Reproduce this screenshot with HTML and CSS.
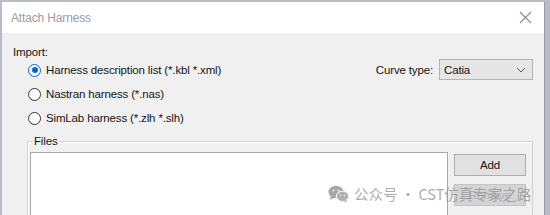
FILE: index.html
```html
<!DOCTYPE html>
<html>
<head>
<meta charset="utf-8">
<link rel="stylesheet" href="styles.css">
</head>
<body>
<div class="window">
  <div class="titlebar">
    <span class="title">Attach Harness</span>
    <svg class="close" width="13" height="13" viewBox="0 0 13 13"><path d="M1 1 L12 12 M12 1 L1 12" stroke="#8a8a8a" stroke-width="1.1" fill="none"/></svg>
  </div>
  <div class="content">
    <div class="top">
      <div class="import">
        <div class="label">Import:</div>
        <div class="radio-row"><span class="radio checked"></span><span>Harness description list (*.kbl *.xml)</span></div>
        <div class="radio-row"><span class="radio"></span><span>Nastran harness (*.nas)</span></div>
        <div class="radio-row"><span class="radio"></span><span>SimLab harness (*.zlh *.slh)</span></div>
      </div>
      <div class="curve">
        <span class="curve-label">Curve type:</span>
        <div class="select"><span>Catia</span>
          <svg width="10" height="6" viewBox="0 0 10 6"><path d="M1 1 L5 5 L9 1" stroke="#555" stroke-width="1" fill="none"/></svg>
        </div>
      </div>
    </div>
    <div class="group">
      <span class="legend">Files</span>
      <div class="group-body">
        <div class="listbox"></div>
        <div class="buttons">
          <div class="btn">Add</div>
          <div class="btn disabled">Remove</div>
        </div>
      </div>
    </div>
  </div>
  <div class="watermark">
    <svg width="21" height="18" viewBox="0 0 21 18">
      <ellipse cx="8" cy="7" rx="7.5" ry="6.3" fill="#a6a6a6"/>
      <path d="M3 11 L2 15 L6.5 12.5 Z" fill="#a6a6a6"/>
      <ellipse cx="14.5" cy="11.3" rx="6.2" ry="5.2" fill="#b0b0b0" stroke="#f0f0f0" stroke-width="1.2"/>
      <path d="M18 15 L19.5 17.6 L15.5 16 Z" fill="#b0b0b0"/>
      <circle cx="5.5" cy="5.5" r="1" fill="#f0f0f0"/>
      <circle cx="10.5" cy="5.5" r="1" fill="#f0f0f0"/>
      <circle cx="12.5" cy="10.5" r="0.8" fill="#f0f0f0"/>
      <circle cx="16.5" cy="10.5" r="0.8" fill="#f0f0f0"/>
    </svg>
    <span>公众号 · CST仿真专家之路</span>
  </div>
</div>
</body>
</html>
```

FILE: styles.css
```css
html, body {
  margin: 0;
  padding: 0;
}
body {
  background: #b8bcc8;
  width: 550px;
  height: 215px;
  overflow: hidden;
  font-family: "Liberation Sans", Arial, sans-serif;
  font-size: 11.5px;
  letter-spacing: -0.15px;
  color: #151515;
}
.window {
  position: relative;
  margin: 2px 0 0 2px;
  width: 543px;
  height: 213px;
  background: #f0f0f0;
  border-right: 1px solid #9a9ca4;
  box-sizing: border-box;
  display: flex;
  flex-direction: column;
}
.titlebar {
  height: 31px;
  background: #ffffff;
  display: flex;
  align-items: center;
  justify-content: space-between;
  padding: 0 12px 0 9px;
  flex-shrink: 0;
}
.title {
  color: #9b9b9b;
  font-size: 12px;
}
.close {
  display: block;
}
.content {
  padding: 9px 0 0 11px;
  flex: 1;
  display: flex;
  flex-direction: column;
}
.top {
  display: flex;
  justify-content: space-between;
  padding-right: 11px;
}
.label {
  height: 16px;
  line-height: 20px;
}
.radio-row {
  display: flex;
  align-items: center;
  height: 24px;
  padding-left: 15px;
  gap: 5px;
}
.radio {
  width: 11px;
  height: 11px;
  border: 1px solid #333;
  border-radius: 50%;
  background: #fff;
  box-sizing: content-box;
  position: relative;
}
.radio.checked {
  border-color: #0a64c8;
}
.radio.checked::after {
  content: "";
  position: absolute;
  left: 2.5px;
  top: 2.5px;
  width: 6px;
  height: 6px;
  border-radius: 50%;
  background: #0a64c8;
}
.curve {
  display: flex;
  align-items: center;
  gap: 6px;
  margin-top: 17px;
  height: 21px;
}
.select {
  width: 94px;
  height: 21px;
  box-sizing: border-box;
  border: 1px solid #b4b4b4;
  background: #e6e6e6;
  display: flex;
  align-items: center;
  justify-content: space-between;
  padding: 0 6px 0 4px;
}
.group {
  position: relative;
  margin: 11px 0 0 14px;
  width: 504px;
  flex: 1;
  border: 1px solid #d2d2d2;
  border-bottom: none;
  box-shadow: inset 1px 1px 0 #fff;
}
.legend {
  position: absolute;
  top: -9px;
  left: 4px;
  padding: 0 2px;
  background: #f0f0f0;
  line-height: 16px;
}
.group-body {
  display: flex;
  gap: 6px;
  padding: 10px 0 0 2px;
  height: 100%;
  box-sizing: border-box;
}
.listbox {
  width: 418px;
  background: #fff;
  border: 1px solid #a8a8a8;
  border-bottom: none;
  box-sizing: border-box;
}
.buttons {
  display: flex;
  flex-direction: column;
  gap: 8px;
  padding-top: 2px;
}
.btn {
  width: 72px;
  height: 22px;
  box-sizing: border-box;
  border: 1px solid #adadad;
  background: #e1e1e1;
  display: flex;
  align-items: center;
  justify-content: center;
}
.btn.disabled {
  background: #d4d4d4;
  border-color: #c4c4c4;
  color: #b0b0b0;
}
.watermark {
  position: absolute;
  left: 326px;
  top: 181px;
  display: flex;
  align-items: center;
  gap: 5px;
  font-family: "Noto Sans CJK SC", "Noto Sans", sans-serif;
  font-size: 14.5px;
  letter-spacing: 0;
  color: rgba(150, 150, 150, 0.8);
}
.watermark svg {
  display: block;
}
```
